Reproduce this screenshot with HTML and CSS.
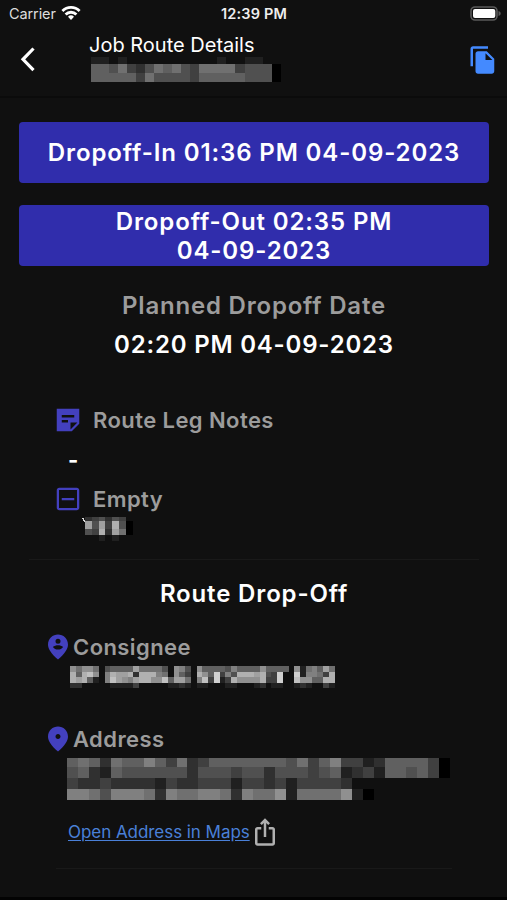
FILE: index.html
```html
<!DOCTYPE html>
<html lang="en">
<head>
    <meta charset="UTF-8">
    <title>Job Route Details</title>
    <link rel="stylesheet" href="styles.css">
</head>
<body>
<div id="status">
    <div class="carrier">
        <span>Carrier</span>
        <svg width="20" height="15" viewBox="0 0 20 15" fill="none" stroke="#fff" stroke-width="2.8">
            <path d="M1.4 5a12.2 12.2 0 0 1 17.2 0"/>
            <path d="M4.6 8.5a7.6 7.6 0 0 1 10.8 0"/>
            <path d="M10 14L7 10.8a4.3 4.3 0 0 1 6 0z" fill="#fff" stroke="none"/>
        </svg>
    </div>
    <span class="time">12:39 PM</span>
    <svg class="battery" width="31" height="15" viewBox="0 0 31 15">
        <rect x="1" y="1" width="26" height="13" rx="4" fill="#101010" stroke="#5a5a5a" stroke-width="1.6"/>
        <rect x="3" y="3" width="22.3" height="9" rx="2" fill="#fff"/>
        <path d="M28.5 5c1.6.6 2.2 1.4 2.2 2.5s-.6 1.9-2.2 2.5z" fill="#5a5a5a"/>
    </svg>
</div>
<div id="head">
    <svg class="back" width="16" height="26" viewBox="0 0 16 26" fill="none" stroke="#fff" stroke-width="3.2">
        <path d="M14.5 2.5L4 13.3l10.5 10.8"/>
    </svg>
    <div class="title">
        <span>Job Route Details</span>
        <svg class="mosaic" id="jobNo"></svg>
    </div>
    <svg class="copy" width="30" height="30" viewBox="0 0 24 24" fill="#448aff">
        <path d="M16 1H4c-1.1 0-2 .9-2 2v14h2V3h12V1zm-1 4l6 6v10c0 1.1-.9 2-2 2H7.99C6.89 23 6 22.1 6 21l.01-14c0-1.1.89-2 1.99-2h7zm-1 7h5.5L14 6.5V12z"/>
    </svg>
</div>
<div id="wrap">
    <button class="btn">Dropoff-In 01:36 PM 04-09-2023</button>
    <button class="btn">Dropoff-Out 02:35 PM<br>04-09-2023</button>
    <div class="planned">
        <div class="label">Planned Dropoff Date</div>
        <div class="date">02:20 PM 04-09-2023</div>
    </div>
    <div class="notes">
        <div class="row">
            <svg class="icon" viewBox="0 0 24 24">
                <path d="M21 3H3v18h12l6-6V3zM7 8h10v2H7V8zm5 6H7v-2h5v2zm2 5.5V14h5.5L14 19.5z"/>
            </svg>
            <span class="label">Route Leg Notes</span>
        </div>
        <div class="dash">-</div>
        <div class="row">
            <svg class="icon" viewBox="0 0 24 24">
                <path d="M19 3H5c-1.1 0-2 .9-2 2v14c0 1.1.9 2 2 2h14c1.1 0 2-.9 2-2V5c0-1.1-.9-2-2-2zm0 16.2H4.8V4.8h14.4v14.4zM7 11.1h10v1.8H7z"/>
            </svg>
            <span class="label">Empty</span>
        </div>
        <svg class="mosaic" id="empty"><path d="M-3.5 1h2.5l1.5 5z" fill="#ddd"/></svg>
    </div>
    <div class="line"></div>
    <h2>Route Drop-Off</h2>
    <div class="place">
        <div class="row">
            <svg class="icon" viewBox="0 0 24 24">
                <path fill-rule="evenodd" d="M12 2c-4.2 0-8 3.22-8 8.2 0 3.32 2.67 7.25 8 11.8 5.33-4.55 8-8.48 8-11.8C20 5.22 16.2 2 12 2zm0 3.3a2 2 0 1 1 0 4 2 2 0 0 1 0-4zm0 8.7c-1.7 0-3.2-.8-4.1-2.1.9-1 2.7-1.4 4.1-1.4s3.2.4 4.1 1.4c-.9 1.3-2.4 2.1-4.1 2.1z"/>
            </svg>
            <span class="label">Consignee</span>
        </div>
        <svg class="mosaic" id="consignee"></svg>
    </div>
    <div class="place">
        <div class="row">
            <svg class="icon" viewBox="0 0 24 24">
                <path d="M12 2c-4.2 0-8 3.22-8 8.2 0 3.32 2.67 7.25 8 11.8 5.33-4.55 8-8.48 8-11.8C20 5.22 16.2 2 12 2zm0 10c-1.1 0-2-.9-2-2s.9-2 2-2 2 .9 2 2-.9 2-2 2z"/>
            </svg>
            <span class="label">Address</span>
        </div>
        <svg class="mosaic" id="address"></svg>
    </div>
    <div class="maps">
        <a href="#">Open Address in Maps</a>
        <svg width="30" height="30" viewBox="0 0 24 24" fill="#b0b0b0">
            <path d="M16 5l-1.42 1.42-1.59-1.59V16h-1.98V4.83L9.42 6.42 8 5l4-4 4 4zm4 5v11c0 1.1-.9 2-2 2H6c-1.1 0-2-.9-2-2V10c0-1.1.9-2 2-2h3v2H6v11h12V10h-3V8h3c1.1 0 2 .9 2 2z"/>
        </svg>
    </div>
    <div class="line last"></div>
</div>
<script>
    /*hidden values: one hex digit per cell is the grey level, 1 is the page colour*/
    function mosaic(id, w, heights, rows) {
        var svg = document.getElementById(id);
        var y = 0;
        for(var i=0;i<rows.length;i++) {
            for(var j=0;j<rows[i].length;j++) {
                if(rows[i][j]=='1') {
                    continue;
                }
                var rect = document.createElementNS('http://www.w3.org/2000/svg', 'rect');
                var c = parseInt(rows[i][j], 16) * 16;
                rect.setAttribute('x', j * w);
                rect.setAttribute('y', y);
                rect.setAttribute('width', w);
                rect.setAttribute('height', heights[i]);
                rect.setAttribute('fill', 'rgb(' + c + ',' + c + ',' + c + ')');
                svg.appendChild(rect);
            }
            y += heights[i];
        }
    }
    mosaic('jobNo', 9.03, [6.5, 9, 9], [
        '221211111111112112211',
        '665743576754777745550',
        '666664755554666665550'
    ]);
    mosaic('empty', 6.83, [4.3, 7.3, 6.4, 6], [
        '3453541',
        'a5a4b50',
        '54b3a70',
        '1121211'
    ]);
    mosaic('consignee', 5.75, [5.5, 5.6, 5.6, 5.4], [
        '97997156666a77775198519666658666696666192786a7',
        'b6bc918baab3bbb8719641b96d485bbbab54d11d28874b',
        'bab6218ca98abb99c6aa718c4d24b9999b44d11c9966bb',
        '3311111222241111122321221112211123122112321142'
    ]);
    mosaic('address', 10.95, [8.7, 11, 11, 11], [
        '67637668647346666666574684423666640',
        '56326555555355545535554562342665640',
        '43343333243344424434244443111111111',
        '88758887387788738779277779201111111'
    ]);
</script>
</body>
</html>
```
FILE: styles.css
```css
*{
    margin: 0;
    padding: 0;
    box-sizing: border-box;
}
body {
    width: 507px;
    height: 900px;
    overflow: hidden;
    background-color: #101010;
    color: #fff;
    font-family: Inter, "Liberation Sans", sans-serif;
    border-bottom: 3px solid #030303;
}
svg {
    display: block;
    flex: none;
}
#status {
    height: 27px;
    display: grid;
    grid-template-columns: 1fr auto 1fr;
    align-items: center;
    padding: 0 6px 0 9px;
    font-size: 14.5px;
}
.carrier {
    display: flex;
    align-items: center;
    gap: 5px;
    color: #ddd;
    letter-spacing: -0.1px;
}
.time {
    position: relative;
    left: -1px;
    font-weight: 600;
    color: #eee;
    letter-spacing: 0.15px;
}
.battery {
    justify-self: end;
}
#head {
    height: 71px;
    display: flex;
    align-items: flex-start;
    padding: 6px 9.5px 0 19px;
    border-bottom: 2px solid #0b0b0b;
}
.back {
    margin-top: 13px;
}
.title {
    flex: 1;
    margin-left: 54px;
    font-size: 20px;
    line-height: 24px;
}
.title span {
    display: block;
}
.copy {
    margin-top: 12px;
}
.mosaic {
    overflow: visible;
    shape-rendering: crispEdges;
}
#jobNo {
    width: 190px;
    height: 25px;
    margin: 0 0 0 2px;
}
#wrap {
    padding: 24px 18px 0 19px;
}
.btn {
    display: block;
    width: 100%;
    height: 61px;
    margin-bottom: 22px;
    border: 0;
    border-radius: 4px;
    background-color: #302dac;
    color: #fff;
    font-family: inherit;
    font-size: 24px;
    font-weight: 600;
    line-height: 29px;
    letter-spacing: 0.88px;
}
.planned {
    text-align: center;
    font-size: 24px;
    font-weight: 600;
    line-height: 39px;
    letter-spacing: 0.8px;
    margin-top: -2px;
}
.label {
    color: #9c9c9c;
}
.notes {
    padding: 41px 34px 0;
    height: 195px;
}
.row {
    display: flex;
    align-items: center;
    height: 30px;
    font-size: 22px;
    font-weight: 600;
    letter-spacing: 0.42px;
}
.icon {
    width: 30px;
    height: 30px;
    fill: #4340be;
}
.notes .icon {
    margin-right: 10px;
}
.dash {
    height: 49px;
    line-height: 50px;
    padding-left: 15px;
    font-size: 22px;
    font-weight: 700;
}
#empty {
    width: 48px;
    height: 24px;
    margin: 3px 0 0 32px;
}
.line {
    height: 1px;
    margin: 0 10px;
    background-color: #191919;
}
h2 {
    margin-top: 19px;
    height: 53px;
    text-align: center;
    font-size: 24px;
    font-weight: 600;
    line-height: 29px;
    letter-spacing: 0.85px;
}
.place {
    height: 92px;
    padding-left: 24px;
}
#consignee {
    width: 270px;
    height: 22px;
    margin: 4px 0 0 27px;
}
#address {
    width: 380px;
    height: 42px;
    margin: 4px 0 0 24px;
}
.maps {
    display: flex;
    align-items: center;
    height: 31px;
    padding: 1px 0 0 49px;
}
.maps a {
    color: #4a80d8;
    font-size: 17px;
    letter-spacing: -0.05px;
    text-underline-offset: 2px;
}
.last {
    margin: 21px 37px 0;
}
```
